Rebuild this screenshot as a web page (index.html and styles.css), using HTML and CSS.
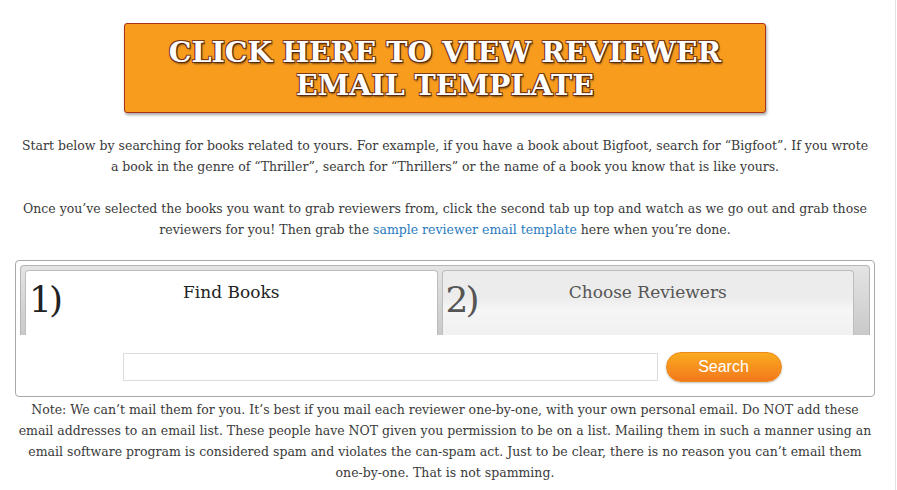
FILE: index.html
```html
<!DOCTYPE html>
<html lang="en">
<head>
  <meta charset="UTF-8" />
  <title>Find Reviewers</title>
  <link rel="stylesheet" href="styles.css">
</head>
<body>
  <div class="page">
    <a href="#" class="template-btn">CLICK HERE TO VIEW REVIEWER<br>EMAIL TEMPLATE</a>

    <p class="intro">Start below by searching for books related to yours. For example, if you have a book about Bigfoot, search for “Bigfoot”. If you wrote a book in the genre of “Thriller”, search for “Thrillers” or the name of a book you know that is like yours.</p>

    <p class="intro">Once you’ve selected the books you want to grab reviewers from, click the second tab up top and watch as we go out and grab those reviewers for you! Then grab the <a href="#">sample reviewer email template</a> here when you’re done.</p>

    <div class="tabs">
      <ul class="tab-nav">
        <li class="tab active"><span class="num">1)</span><span class="label">Find Books</span></li>
        <li class="tab"><span class="num">2)</span><span class="label">Choose Reviewers</span></li>
      </ul>
      <form class="search">
        <input type="text" name="q">
        <button type="submit">Search</button>
      </form>
    </div>

    <p class="note">Note: We can’t mail them for you. It’s best if you mail each reviewer one-by-one, with your own personal email. Do NOT add these email addresses to an email list. These people have NOT given you permission to be on a list. Mailing them in such a manner using an email software program is considered spam and violates the can-spam act. Just to be clear, there is no reason you can’t email them one-by-one. That is not spamming.</p>
  </div>
</body>
</html>
```

FILE: styles.css
```css
body {
  margin: 0;
  background: white;
  color: #3a3a3a;
  font-family: 'DejaVu Serif', serif;
  font-size: 12.5px;
}

.page {
  width: 860px;
  padding: 23px 20px 0 15px;
  border-right: 1px solid #e2e2e2;
  min-height: 490px;
  box-sizing: content-box;
}

.template-btn {
  display: block;
  width: 640px;
  margin: 0 auto 0 109px;
  box-sizing: content-box;
  background: #f89c1e;
  border: 1px solid #a8321a;
  border-radius: 3px;
  box-shadow: 1px 2px 3px rgba(0,0,0,0.35);
  color: white;
  text-align: center;
  text-decoration: none;
  font-family: 'DejaVu Serif', serif;
  font-weight: bold;
  font-size: 28.5px;
  line-height: 33px;
  padding-top: 12px;
  height: 76px;
  text-shadow: 1px 1px 0 #5a2a10, -1px -1px 0 #7a3a14, 1px -1px 0 #7a3a14, -1px 1px 0 #7a3a14, 1px 2px 2px rgba(0,0,0,0.5);
}

.intro {
  text-align: center;
  line-height: 21px;
  margin: 22px 2px 0;
}

.intro + .intro {
  margin-top: 21px;
}

.intro a {
  color: #2a7ac0;
  text-decoration: none;
}

.tabs {
  margin-top: 20px;
  border: 1px solid #a9a9a9;
  border-radius: 4px;
  padding: 4px;
}

.tab-nav {
  list-style: none;
  margin: 0;
  padding: 4px 15px 0 4px;
  display: flex;
  gap: 4px;
  background: linear-gradient(#e4e4e4, #c9c9c9);
  border: 1px solid #b5b5b5;
  border-radius: 4px 4px 0 0;
  border-bottom: none;
  height: 65px;
}

.tab {
  flex: 1;
  position: relative;
  border: 1px solid #bdbdbd;
  border-bottom: none;
  border-radius: 4px 4px 0 0;
  background: linear-gradient(#ececec 0, #ececec 42%, #f6f6f6 60%, #f0f0f0 100%);
  color: #555;
  text-align: center;
}

.tab.active {
  background: white;
  color: #222;
}

.tab .num {
  position: absolute;
  left: 3px;
  top: 9px;
  font-size: 36px;
  line-height: 40px;
  letter-spacing: -3px;
}

.tab .label {
  display: block;
  padding-top: 11px;
  font-size: 17px;
}

.search {
  display: flex;
  justify-content: center;
  align-items: center;
  gap: 8px;
  padding: 17px 0 10px 14px;
}

.search input {
  width: 533px;
  height: 26px;
  border: 1px solid #dcdcdc;
  padding: 0;
}

.search button {
  width: 116px;
  height: 30px;
  border: 1px solid #e98a1a;
  border-radius: 15px;
  background: linear-gradient(#fbab20, #f2781c);
  box-shadow: 0 1px 2px rgba(0,0,0,0.25);
  color: white;
  font-family: 'Liberation Sans', Arial, sans-serif;
  font-size: 16px;
  cursor: pointer;
}

.note {
  text-align: center;
  line-height: 21px;
  margin: 2px 0 0;
}
```
